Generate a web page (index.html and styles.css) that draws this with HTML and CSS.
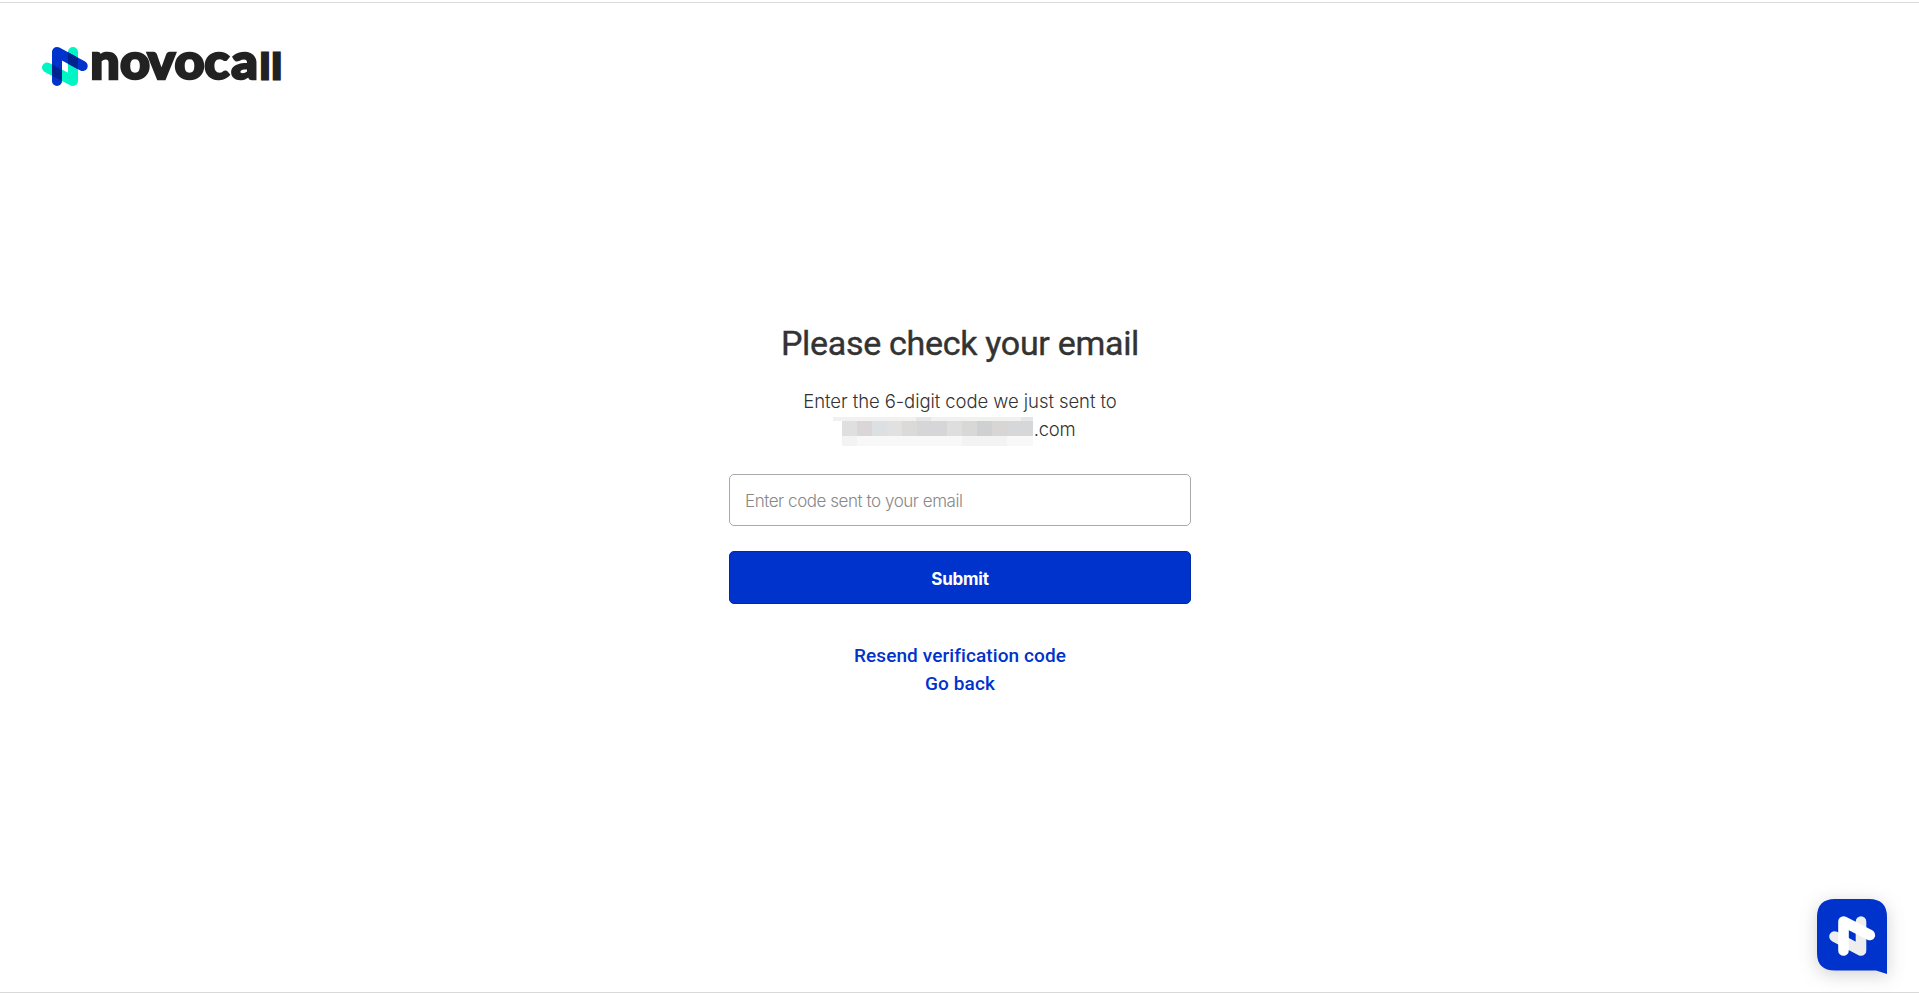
FILE: index.html
```html
<!DOCTYPE html>
<html lang="en">
<head>
    <meta charset="UTF-8">
    <meta name="viewport" content="width=device-width, initial-scale=1.0">
    <title>Novocall</title>
    <link rel="stylesheet" href="styles.css">
</head>
<body>
    <header class="header">
        <svg class="logo" width="250" height="76" viewBox="0 -24 250 76" role="img" aria-label="novocall">
            <defs>
                <clipPath id="tealBar"><rect x="26" y="0" width="10" height="42"/></clipPath>
                <clipPath id="blueBar"><rect x="10" y="0" width="10" height="42"/></clipPath>
            </defs>
            <g fill="none" stroke-width="10" stroke-linecap="round" stroke-linejoin="round">
                <path stroke="#00f5c4" d="M31 7V36L5 22.5"/>
                <path stroke="#0033cc" d="M15 36V7L40.7 21"/>
                <path stroke="#00238f" d="M15 7L40.7 21" clip-path="url(#tealBar)"/>
                <path stroke="#00238f" d="M31 36L5 22.5" clip-path="url(#blueBar)"/>
            </g>
            <text class="wordmark" y="34" transform="scale(1.04 1)"><tspan x="46.5">n</tspan><tspan x="75">o</tspan><tspan x="101.5">v</tspan><tspan x="127.5">o</tspan><tspan x="156">c</tspan><tspan x="182">a</tspan><tspan class="short" x="210">l</tspan><tspan class="short" x="221.5">l</tspan></text>
        </svg>
    </header>

    <main class="container">
        <h1>Please check your email</h1>
        <p class="message">Enter the 6-digit code we just sent to</p>
        <p class="message address">
            <svg class="mask" width="200" height="29" viewBox="0 0 200 29" shape-rendering="crispEdges" aria-hidden="true">
                <path fill="#f1f1f0" d="M0 0H200V4H0z"/>
                <path fill="#e6e6e6" d="M83 0h15v4h-15zM188 0h12v4h-12z"/>
                <path fill="#dfdfe0" d="M9 4H200V19H9z"/>
                <path fill="#dad6d7" d="M24 4h15v15H24z"/>
                <path fill="#dde0e2" d="M39 4h15v15H39z"/>
                <path fill="#e1e1e2" d="M54 4h15v15H54z"/>
                <path fill="#dcdad9" d="M69 4h15v15H69z"/>
                <path fill="#d6d6d8" d="M84 4h30v15H84z"/>
                <path fill="#dededf" d="M114 4h15v15h-15z"/>
                <path fill="#d8d8d7" d="M129 4h15v15h-15z"/>
                <path fill="#cfd0d2" d="M144 4h15v15h-15z"/>
                <path fill="#d8d6d4" d="M159 4h15v15h-15z"/>
                <path fill="#d5d7d9" d="M174 4h26v15h-26z"/>
                <path fill="#f8f8f8" d="M9 19H200V29H9z"/>
                <path fill="#f3f3f3" d="M9 19h15v10H9zM129 19h45v10h-45z"/>
            </svg><span>.com</span>
        </p>
        <form id="codeForm">
            <input type="text" id="code" name="code" placeholder="Enter code sent to your email">
            <button type="submit">Submit</button>
        </form>
        <div class="links">
            <a href="#">Resend verification code</a>
            <a href="#">Go back</a>
        </div>
    </main>

    <!-- Chat widget -->
    <svg class="chat" width="71" height="76" viewBox="0 0 71 76" role="img" aria-label="Chat">
        <path fill="#0033cc" d="M18 0H52Q70 0 70 18V75L59 71.5H18Q0 71.5 0 54V18Q0 0 18 0z"/>
        <g fill="none" stroke-width="10.6" stroke-linecap="round" stroke-linejoin="round">
            <path stroke="#eee" d="M44 22.5V51.5L17.5 37.5"/>
            <path stroke="#fff" d="M26.5 51.5V22.5L52.8 36"/>
        </g>
    </svg>
</body>
</html>
```

FILE: styles.css
```css
* {
    box-sizing: border-box;
}
body {
    font-family: Inter, "Liberation Sans", sans-serif;
    margin: 0;
    height: 100vh;
    overflow: hidden;
    background-color: white;
    color: #333;
    border-bottom: 1px solid #d9d9d9;
    display: flex;
    flex-direction: column;
}
.header {
    height: 322px;
    padding: 21px 0 0 42px;
    background: linear-gradient(#d9d9d9, #d9d9d9) 0 2px / 100% 1px no-repeat;
}
.logo {
    display: block;
}
.wordmark {
    font-family: Lato, sans-serif;
    font-weight: 900;
    font-size: 50px;
    fill: #222;
    stroke: #222;
    stroke-width: 2.4px;
}
.wordmark .short {
    font-size: 34px;
    stroke-width: 3px;
}
.container {
    width: 462px;
    margin: 0 auto;
    text-align: center;
    position: relative;
    left: 0.5px;
}
h1 {
    margin: 0 0 22px;
    font-family: Roboto, sans-serif;
    font-size: 34px;
    font-weight: 400;
    line-height: 43px;
    letter-spacing: -0.3px;
    -webkit-text-stroke: 0.4px #333;
    white-space: nowrap;
}
.message {
    margin: 0;
    font-size: 18.5px;
    font-weight: 300;
    line-height: 28px;
    letter-spacing: -0.07px;
}
.address {
    display: flex;
    justify-content: center;
    margin-bottom: 31px;
}
.address span {
    line-height: 28px;
    letter-spacing: -0.3px;
}
.mask {
    margin: 2px 1px -3px -12px;
}
#code {
    display: block;
    width: 100%;
    height: 52px;
    padding: 2px 15px 0;
    border: 1px solid #aaa;
    border-radius: 5px;
    font-family: inherit;
    font-size: 17px;
    font-weight: 300;
    letter-spacing: -0.45px;
    outline: none;
}
#code::placeholder {
    color: #888;
}
button {
    display: block;
    width: 100%;
    height: 53px;
    margin-top: 25px;
    padding: 3px 0 0;
    border: 1px solid #0029a8;
    border-radius: 5px;
    background-color: #0033cc;
    color: white;
    font-family: inherit;
    font-size: 17px;
    font-weight: 700;
    letter-spacing: -0.25px;
    cursor: pointer;
}
.links {
    display: flex;
    flex-direction: column;
    align-items: center;
    margin-top: 38px;
}
.links a {
    color: #0033cc;
    font-family: Roboto, sans-serif;
    font-size: 19px;
    font-weight: 500;
    line-height: 28px;
    letter-spacing: 0.1px;
    text-decoration: none;
}
.chat {
    position: fixed;
    right: 31px;
    bottom: 18px;
    overflow: visible;
    filter: drop-shadow(0 4px 9px rgba(0, 0, 0, 0.18));
}
```
